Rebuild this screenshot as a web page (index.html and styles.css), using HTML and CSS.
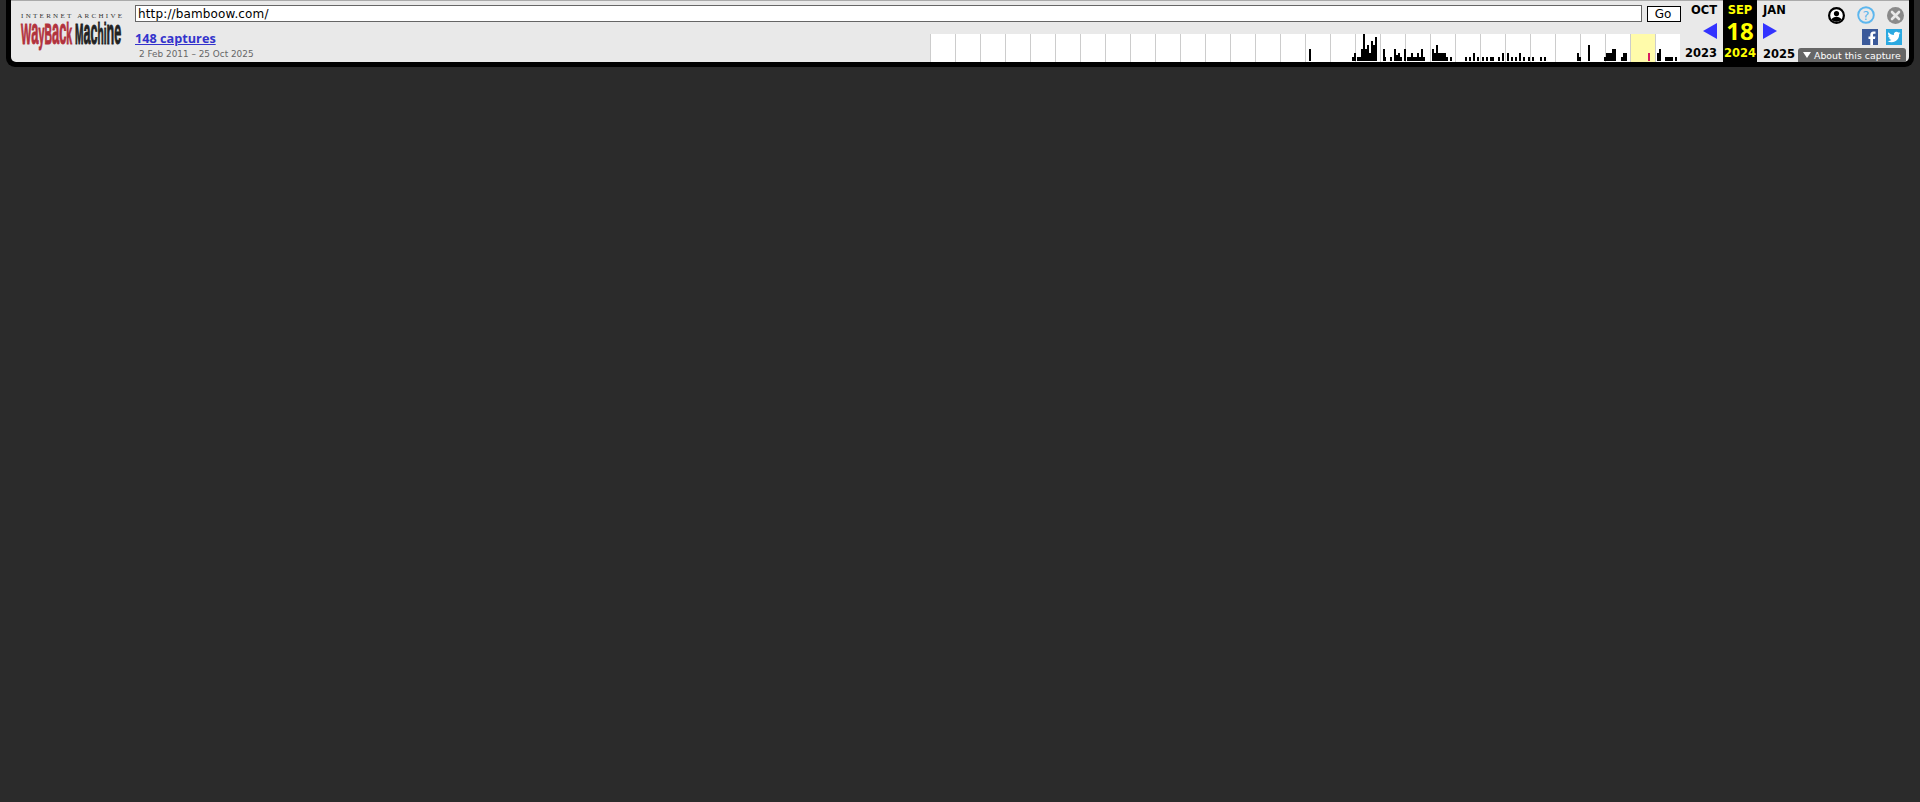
FILE: index.html
```html
<!DOCTYPE html>
<html lang="en">
<head>
<meta charset="utf-8">
<title>Wayback Machine</title>
<link rel="stylesheet" href="styles.css">
</head>
<body>
<div class="frame">
  <div class="toolbar">
    <a class="logo" href="#">
      <span class="logo-ia">INTERNET ARCHIVE</span>
      <svg class="logo-wm" width="100" height="27" viewBox="0 0 100 27">
        <text class="wm-red" transform="translate(0 22) scale(.36 1)"><tspan font-size="30">W</tspan><tspan font-size="36">a</tspan><tspan font-size="30">y</tspan><tspan font-size="29">B</tspan><tspan font-size="36">ac</tspan><tspan font-size="29">k</tspan></text>
        <text class="wm-black" transform="translate(54 22) scale(.35 1)"><tspan font-size="29">M</tspan><tspan font-size="36">ac</tspan><tspan font-size="29">hi</tspan><tspan font-size="36">ne</tspan></text>
      </svg>
    </a>
    <div class="main">
      <form class="url-row">
        <input class="url" type="text" value="http://bamboow.com/">
        <button class="go" type="button">Go</button>
      </form>
      <div class="info-row">
        <div class="captures">
          <a class="captures-link" href="#">148 captures</a>
          <div class="captures-range">2 Feb 2011 – 25 Oct 2025</div>
        </div>
        <svg class="sparkline" width="750" height="28" viewBox="0 0 750 28">
          <rect class="spark-current" x="701" y="0" width="24" height="28"/>
          <path class="spark-bars" d="M379 27v-12h2v12zM422 27v-4h2v4zM424 27v-8h2v8zM427 27v-4h4v4zM431 27v-12h2v12zM433 27v-27h2v27zM435 27v-12h2v12zM437 27v-16h2v16zM439 27v-8h2v8zM441 27v-20h2v20zM443 27v-16h2v16zM445 27v-24h2v24zM453 27v-12h2v12zM455 27v-4h1v4zM460 27v-4h2v4zM464 27v-12h2v12zM466 27v-6h2v6zM468 27v-8h2v8zM470 27v-4h2v4zM474 27v-12h2v12zM477 27v-4h4v4zM481 27v-8h2v8zM483 27v-4h4v4zM487 27v-8h2v8zM489 27v-4h2v4zM491 27v-12h2v12zM493 27v-4h2v4zM502 27v-12h2v12zM504 27v-8h2v8zM506 27v-16h2v16zM508 27v-8h8v8zM516 27v-4h2v4zM520 27v-4h2v4zM535 27v-4h2v4zM539 27v-4h2v4zM543 27v-8h2v8zM547 27v-4h2v4zM552 27v-4h2v4zM556 27v-4h2v4zM560 27v-4h4v4zM568 27v-4h2v4zM572 27v-8h2v8zM577 27v-8h2v8zM581 27v-4h2v4zM585 27v-4h2v4zM589 27v-8h2v8zM593 27v-4h2v4zM598 27v-4h2v4zM602 27v-4h2v4zM610 27v-4h2v4zM614 27v-4h2v4zM647 27v-8h2v8zM649 27v-4h2v4zM658 27v-16h2v16zM674 27v-4h2v4zM676 27v-8h6v8zM682 27v-12h4v12zM691 27v-4h2v4zM693 27v-8h4v8zM727 27v-8h2v8zM729 27v-12h2v12zM735 27v-4h8v4zM745 27v-4h2v4z"/>
          <rect class="spark-mark" x="718" y="19" width="2" height="8"/>
        </svg>
      </div>
    </div>
    <div class="calendar">
      <div class="cal-col cal-prev">
        <a class="cal-month" href="#">OCT</a>
        <svg class="cal-arrow" width="14" height="16" viewBox="0 0 14 16"><polygon points="14,0 14,16 0,8"/></svg>
        <a class="cal-year" href="#">2023</a>
      </div>
      <div class="cal-col cal-current">
        <span class="cal-month">SEP</span>
        <span class="cal-day">18</span>
        <span class="cal-year">2024</span>
      </div>
      <div class="cal-col cal-next">
        <a class="cal-month" href="#">JAN</a>
        <svg class="cal-arrow" width="14" height="16" viewBox="0 0 14 16"><polygon points="0,0 14,8 0,16"/></svg>
        <a class="cal-year" href="#">2025</a>
      </div>
    </div>
    <div class="tools">
      <div class="tool-row tool-row-top">
        <svg class="icon" width="17" height="17" viewBox="0 0 17 17">
          <circle cx="8.5" cy="8.5" r="7.4" fill="#fff" stroke="#000" stroke-width="2.2"/>
          <circle cx="8.5" cy="6.6" r="2.6" fill="#000"/>
          <path d="M3.4 12.6c1.2-2 3-2.8 5.1-2.8s3.9.8 5.1 2.8a7 7 0 0 1-10.2 0z" fill="#000"/>
        </svg>
        <svg class="icon" width="18" height="18" viewBox="0 0 18 18">
          <circle cx="9" cy="9" r="7.8" fill="none" stroke="#5cb6ee" stroke-width="1.9"/>
          <text class="help-mark" x="9" y="13.5" text-anchor="middle">?</text>
        </svg>
        <svg class="icon" width="17" height="17" viewBox="0 0 17 17">
          <circle cx="8.5" cy="8.5" r="8.5" fill="#8a8a8a"/>
          <path d="M5 5l7 7M12 5l-7 7" stroke="#e9e9e9" stroke-width="2.6" stroke-linecap="round"/>
        </svg>
      </div>
      <div class="tool-row tool-row-social">
        <svg class="icon" width="16" height="16" viewBox="0 0 16 16">
          <rect width="16" height="16" fill="#3b5a9a"/>
          <path d="M11 16v-6h2l.4-2.5H11V6c0-.8.3-1.2 1.3-1.2h1.2V2.500h-2C9.300 2.500 8.300 3.800 8.300 5.700v1.800H6.500V10h1.800v6z" fill="#fff"/>
        </svg>
        <svg class="icon" width="16" height="16" viewBox="0 0 16 16">
          <rect width="16" height="16" fill="#2ba9e1"/>
          <path transform="translate(1.5 1.5) scale(.54)" d="M23.953 4.57a10 10 0 01-2.825.775 4.958 4.958 0 002.163-2.723c-.951.555-2.005.959-3.127 1.184a4.92 4.92 0 00-8.384 4.482C7.69 8.095 4.067 6.13 1.64 3.162a4.822 4.822 0 00-.666 2.475c0 1.71.87 3.213 2.188 4.096a4.904 4.904 0 01-2.228-.616v.06a4.923 4.923 0 003.946 4.827 4.996 4.996 0 01-2.212.085 4.936 4.936 0 004.604 3.417 9.867 9.867 0 01-6.102 2.105c-.39 0-.779-.023-1.17-.067a13.995 13.995 0 007.557 2.209c9.053 0 13.998-7.496 13.998-13.985 0-.21 0-.42-.015-.63A9.935 9.935 0 0024 4.59z" fill="#fff"/>
        </svg>
      </div>
      <a class="about" href="#"><span class="about-caret"></span><span class="about-label">About this capture</span></a>
    </div>
  </div>
</div>
</body>
</html>
```
FILE: styles.css
```css
* { box-sizing: border-box; }

html, body {
  height: 100%;
}

body {
  margin: 0;
  background: #2b2b2b;
  font-family: "DejaVu Sans", sans-serif;
  overflow: hidden;
}

a { text-decoration: none; color: inherit; }

.frame {
  margin: 0 6px;
  padding: 0 5px 5px;
  background: #000;
  border-radius: 0 0 9px 9px;
}

.toolbar {
  display: flex;
  height: 62px;
  border-top: 1px solid #aaa;
  background: #e9e9e9;
  border-radius: 0 0 5px 5px;
}

.logo {
  width: 124px;
  flex: none;
  padding: 12px 0 0 10px;
  display: flex;
  flex-direction: column;
}

.logo-ia {
  font-family: "Liberation Serif", serif;
  font-size: 7px;
  line-height: 6px;
  letter-spacing: 2.3px;
  color: #333;
  white-space: nowrap;
}

.logo-wm {
  display: block;
  margin-top: 3px;
  overflow: visible;
}

.logo-wm text {
  font-family: "Liberation Sans", sans-serif;
  font-weight: 700;
  stroke-width: 1;
}

.wm-red { fill: #b2323d; stroke: #b2323d; }
.wm-black { fill: #222; stroke: #222; }

.main {
  width: 1546px;
  flex: none;
  display: flex;
  flex-direction: column;
}

.url-row {
  display: flex;
  gap: 5px;
  margin: 4px 0 0;
  height: 17px;
  align-items: flex-start;
}

.url {
  flex: 1;
  height: 17px;
  margin: 0;
  padding: 0 2px;
  border: 1px solid #666;
  background: #fff;
  color: #000;
  font: 12px "DejaVu Sans", sans-serif;
  letter-spacing: .14px;
}

.go {
  width: 34px;
  height: 16px;
  margin: 1px 0 0;
  padding: 0 2px 0 0;
  border: 1px solid #000;
  background: #fff;
  color: #000;
  font: 12px/14px "DejaVu Sans", sans-serif;
}

.info-row {
  flex: 1;
  display: flex;
  justify-content: space-between;
  align-items: flex-end;
}

.captures {
  align-self: flex-start;
  padding-top: 9px;
}

.captures-link {
  display: block;
  color: #3333cc;
  font-family: "Open Sans", sans-serif;
  font-size: 12.7px;
  font-weight: 700;
  line-height: 15px;
  text-decoration: underline;
}

.captures-range {
  margin: 3px 0 0 4px;
  color: #666;
  font-size: 8.9px;
  line-height: 11px;
  white-space: nowrap;
}

.sparkline {
  display: block;
  margin-right: 1px;
  background: repeating-linear-gradient(to right, #ccc 0 1px, #fff 1px 25px);
}

.spark-current { fill: #fffbaa; }
.spark-bars { fill: #000; }
.spark-mark { fill: #d81b60; }

.calendar {
  display: flex;
  flex: none;
  margin-top: -1px;
}

.cal-col {
  display: flex;
  flex-direction: column;
  padding-top: 3px;
  font-size: 11.5px;
  font-weight: 700;
  color: #000;
}

.cal-prev {
  width: 42px;
  align-items: flex-end;
  padding-right: 6px;
}

.cal-next {
  width: 41px;
  align-items: flex-start;
  padding-left: 6px;
}

.cal-current {
  width: 34px;
  align-items: center;
  background: #000;
  color: #ffff00;
}

.cal-month {
  height: 14px;
  line-height: 14px;
}

.cal-arrow {
  display: block;
  margin-top: 6px;
  fill: #3333ff;
}

.cal-prev .cal-year {
  margin-top: 7px;
}

.cal-next .cal-year {
  margin-top: 8px;
}

.cal-year {
  line-height: 14px;
}

.cal-day {
  font-family: "Open Sans", sans-serif;
  font-size: 24px;
  line-height: 24px;
  height: 24px;
  margin-top: 2px;
}

.cal-current .cal-year {
  margin-top: 3px;
}

.tools {
  width: 111px;
  flex: none;
  display: flex;
  flex-direction: column;
  align-items: flex-end;
  padding-right: 3px;
}

.tool-row {
  display: flex;
}

.icon { display: block; }

.tool-row-top {
  margin-top: 5px;
  gap: 12px;
  padding-right: 2px;
  align-items: center;
  height: 18px;
}

.tool-row-social {
  margin-top: 5px;
  gap: 8px;
  padding-right: 4px;
}

.help-mark {
  font-family: "DejaVu Sans", sans-serif;
  font-size: 13px;
  fill: #5cb6ee;
}

.about {
  margin-top: auto;
  width: 108px;
  height: 14px;
  display: flex;
  align-items: center;
  gap: 3px;
  padding-left: 5px;
  background: #666;
  border-radius: 3px 3px 0 0;
  color: #fff;
  font-size: 9.4px;
  white-space: nowrap;
}

.about-label {
  line-height: 14px;
  padding-top: 1px;
}

.about-caret {
  width: 0;
  height: 0;
  border-left: 4px solid transparent;
  border-right: 4px solid transparent;
  border-top: 6px solid #fff;
}
```
